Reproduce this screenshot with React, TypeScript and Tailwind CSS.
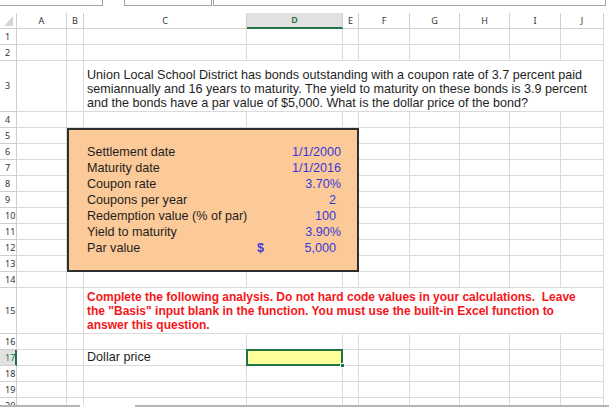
import React from 'react'

const COLS = ['A', 'B', 'C', 'D', 'E', 'F', 'G', 'H', 'I', 'J']

const BOND_ROWS: { label: string; value: string; dollar?: boolean; pad?: boolean }[] = [
  { label: 'Settlement date', value: '1/1/2000' },
  { label: 'Maturity date', value: '1/1/2016' },
  { label: 'Coupon rate', value: '3.70%' },
  { label: 'Coupons per year', value: '2', pad: true },
  { label: 'Redemption value (% of par)', value: '100', pad: true },
  { label: 'Yield to maturity', value: '3.90%' },
  { label: 'Par value', value: '5,000', dollar: true, pad: true },
]

const cellCls = 'border-r border-b border-[#dadada]'
const font = "font-['Liberation_Sans',Arial,sans-serif]"

function Cell({ k }: { k: string }) {
  return <div key={k} className={cellCls} />
}

function RowHeader({ n }: { n: number }) {
  const active = n === 17
  return (
    <div
      className={
        active
          ? "flex items-center pl-[5px] bg-[#e1e1e1] border-b border-[#cfcfcf] border-r-2 border-r-[#217346] text-[#217346] text-[9px] font-['Noto_Sans',sans-serif]"
          : "flex items-center pl-[5px] bg-white border-r border-b border-[#cfcfcf] text-[#333] text-[9px] font-['Noto_Sans',sans-serif]"
      }
    >
      {n}
    </div>
  )
}

function BondBox() {
  return (
    <div className={`col-span-4 row-span-9 bg-[#fcc998] border-2 border-[#2e2e2e] ${font}`}>
      <div className="grid grid-cols-[15px_163px_96px_14px] grid-rows-[14px_16px_16px_16px_16px_16px_16px_16px_14px]">
        <div className="col-span-4" />
        {BOND_ROWS.map((r) => (
          <React.Fragment key={r.label}>
            <div />
            <div className="pl-[3px] text-[12.6px] leading-[16px] text-[#1e1e1e] whitespace-nowrap">
              {r.label}
            </div>
            <div
              className={`flex justify-between text-[12.6px] leading-[16px] text-[#3a3ad6] ${
                r.pad ? 'pr-[7px]' : 'pr-[2px]'
              }`}
            >
              <span className="pl-[10px] font-bold">{r.dollar ? '$' : ''}</span>
              <span>{r.value}</span>
            </div>
            <div />
          </React.Fragment>
        ))}
      </div>
    </div>
  )
}

function rowCells(r: number) {
  const out: React.ReactNode[] = [<RowHeader key={`h${r}`} n={r} />]
  const plain = (c: string) => out.push(<Cell key={`${c}${r}`} k={`${c}${r}`} />)

  if (r === 3) {
    plain('A')
    plain('B')
    out.push(
      <div
        key="c3"
        className={`col-span-8 border-r border-b border-[#dadada] flex flex-col justify-end pl-[3px] pb-[1px] text-[12.6px] leading-[14px] text-[#1e1e1e] whitespace-nowrap ${font}`}
      >
        <span>Union Local School District has bonds outstanding with a coupon rate of 3.7 percent paid</span>
        <span>semiannually and 16 years to maturity. The yield to maturity on these bonds is 3.9 percent</span>
        <span>and the bonds have a par value of $5,000. What is the dollar price of the bond?</span>
      </div>
    )
    return out
  }
  if (r === 5) {
    plain('A')
    out.push(<BondBox key="box" />)
    ;['F', 'G', 'H', 'I', 'J'].forEach(plain)
    return out
  }
  if (r >= 6 && r <= 13) {
    plain('A')
    ;['F', 'G', 'H', 'I', 'J'].forEach(plain)
    return out
  }
  if (r === 15) {
    plain('A')
    plain('B')
    out.push(
      <div
        key="c15"
        className={`col-span-8 border-r border-b border-[#dadada] flex flex-col justify-end pl-[3px] pb-[1px] text-[12px] leading-[14px] font-bold text-[#f5161b] whitespace-pre ${font}`}
      >
        <span>Complete the following analysis. Do not hard code values in your calculations.  Leave</span>
        <span>the "Basis" input blank in the function. You must use the built-in Excel function to</span>
        <span>answer this question.</span>
      </div>
    )
    return out
  }
  if (r === 17) {
    plain('A')
    plain('B')
    out.push(
      <div
        key="c17"
        className={`${cellCls} flex items-center pl-[3px] text-[12.6px] text-[#1e1e1e] ${font}`}
      >
        Dollar price
      </div>
    )
    out.push(
      <div key="d17" className="relative bg-[#ffff9c] border-r border-b border-[#dadada]">
        <div className="absolute -left-px -top-px right-[-1px] bottom-[-1px] border-2 border-[#217346]" />
        <div className="absolute right-[-3px] bottom-[-3px] w-[5px] h-[5px] bg-[#217346] border border-white" />
      </div>
    )
    ;['E', 'F', 'G', 'H', 'I', 'J'].forEach(plain)
    return out
  }
  COLS.forEach(plain)
  return out
}

export default function App() {
  const rows = Array.from({ length: 20 }, (_, i) => i + 1)
  return (
    <div className="w-[609px] h-[407px] bg-white overflow-hidden flex flex-col">
      {/* top toolbar remnants */}
      <div className="h-[13px] flex items-start">
        <div className="w-[103px] h-[6px] border-b border-r border-[#a3a3a3]" />
        <div className="ml-[21px] w-[88px] h-[6px] border-b border-l border-r border-[#a3a3a3]" />
        <div className="ml-[1px] w-[393px] h-[6px] border-b border-l border-r border-[#a3a3a3]" />
      </div>

      {/* sheet */}
      <div className="h-[392px] overflow-hidden">
        <div className="grid grid-cols-[17px_50px_17px_163px_96px_16px_51px_50px_50px_51px_43px] grid-rows-[16px_16px_16px_51px_16px_16px_16px_16px_16px_16px_16px_16px_16px_16px_16px_46px_16px_16px_16px_16px_16px]">
          <div className="flex items-end justify-end pr-[3px] pb-[2px] border-r border-b border-[#cfcfcf]">
            <svg width="9" height="10" viewBox="0 0 9 10">
              <polygon points="9,0 9,10 0,10" fill="#d6d6d6" />
            </svg>
          </div>
          {COLS.map((c) =>
            c === 'D' ? (
              <div
                key={c}
                className="flex items-center justify-center bg-[#e1e1e1] border-r border-[#cfcfcf] border-b-2 border-b-[#217346] text-[9px] font-semibold text-[#217346] font-['Noto_Sans',sans-serif]"
              >
                {c}
              </div>
            ) : (
              <div
                key={c}
                className="flex items-center justify-center border-r border-b border-[#cfcfcf] text-[9px] text-[#333] font-['Noto_Sans',sans-serif]"
              >
                {c}
              </div>
            )
          )}
          {rows.map((r) => rowCells(r))}
        </div>
      </div>

      {/* bottom strip */}
      <div className="h-[2px] flex">
        <div className="w-[80px] bg-[#b5b5b5]" />
        <div className="w-[55px]" />
        <div className="flex-1 bg-[#b5b5b5]" />
      </div>
    </div>
  )
}
